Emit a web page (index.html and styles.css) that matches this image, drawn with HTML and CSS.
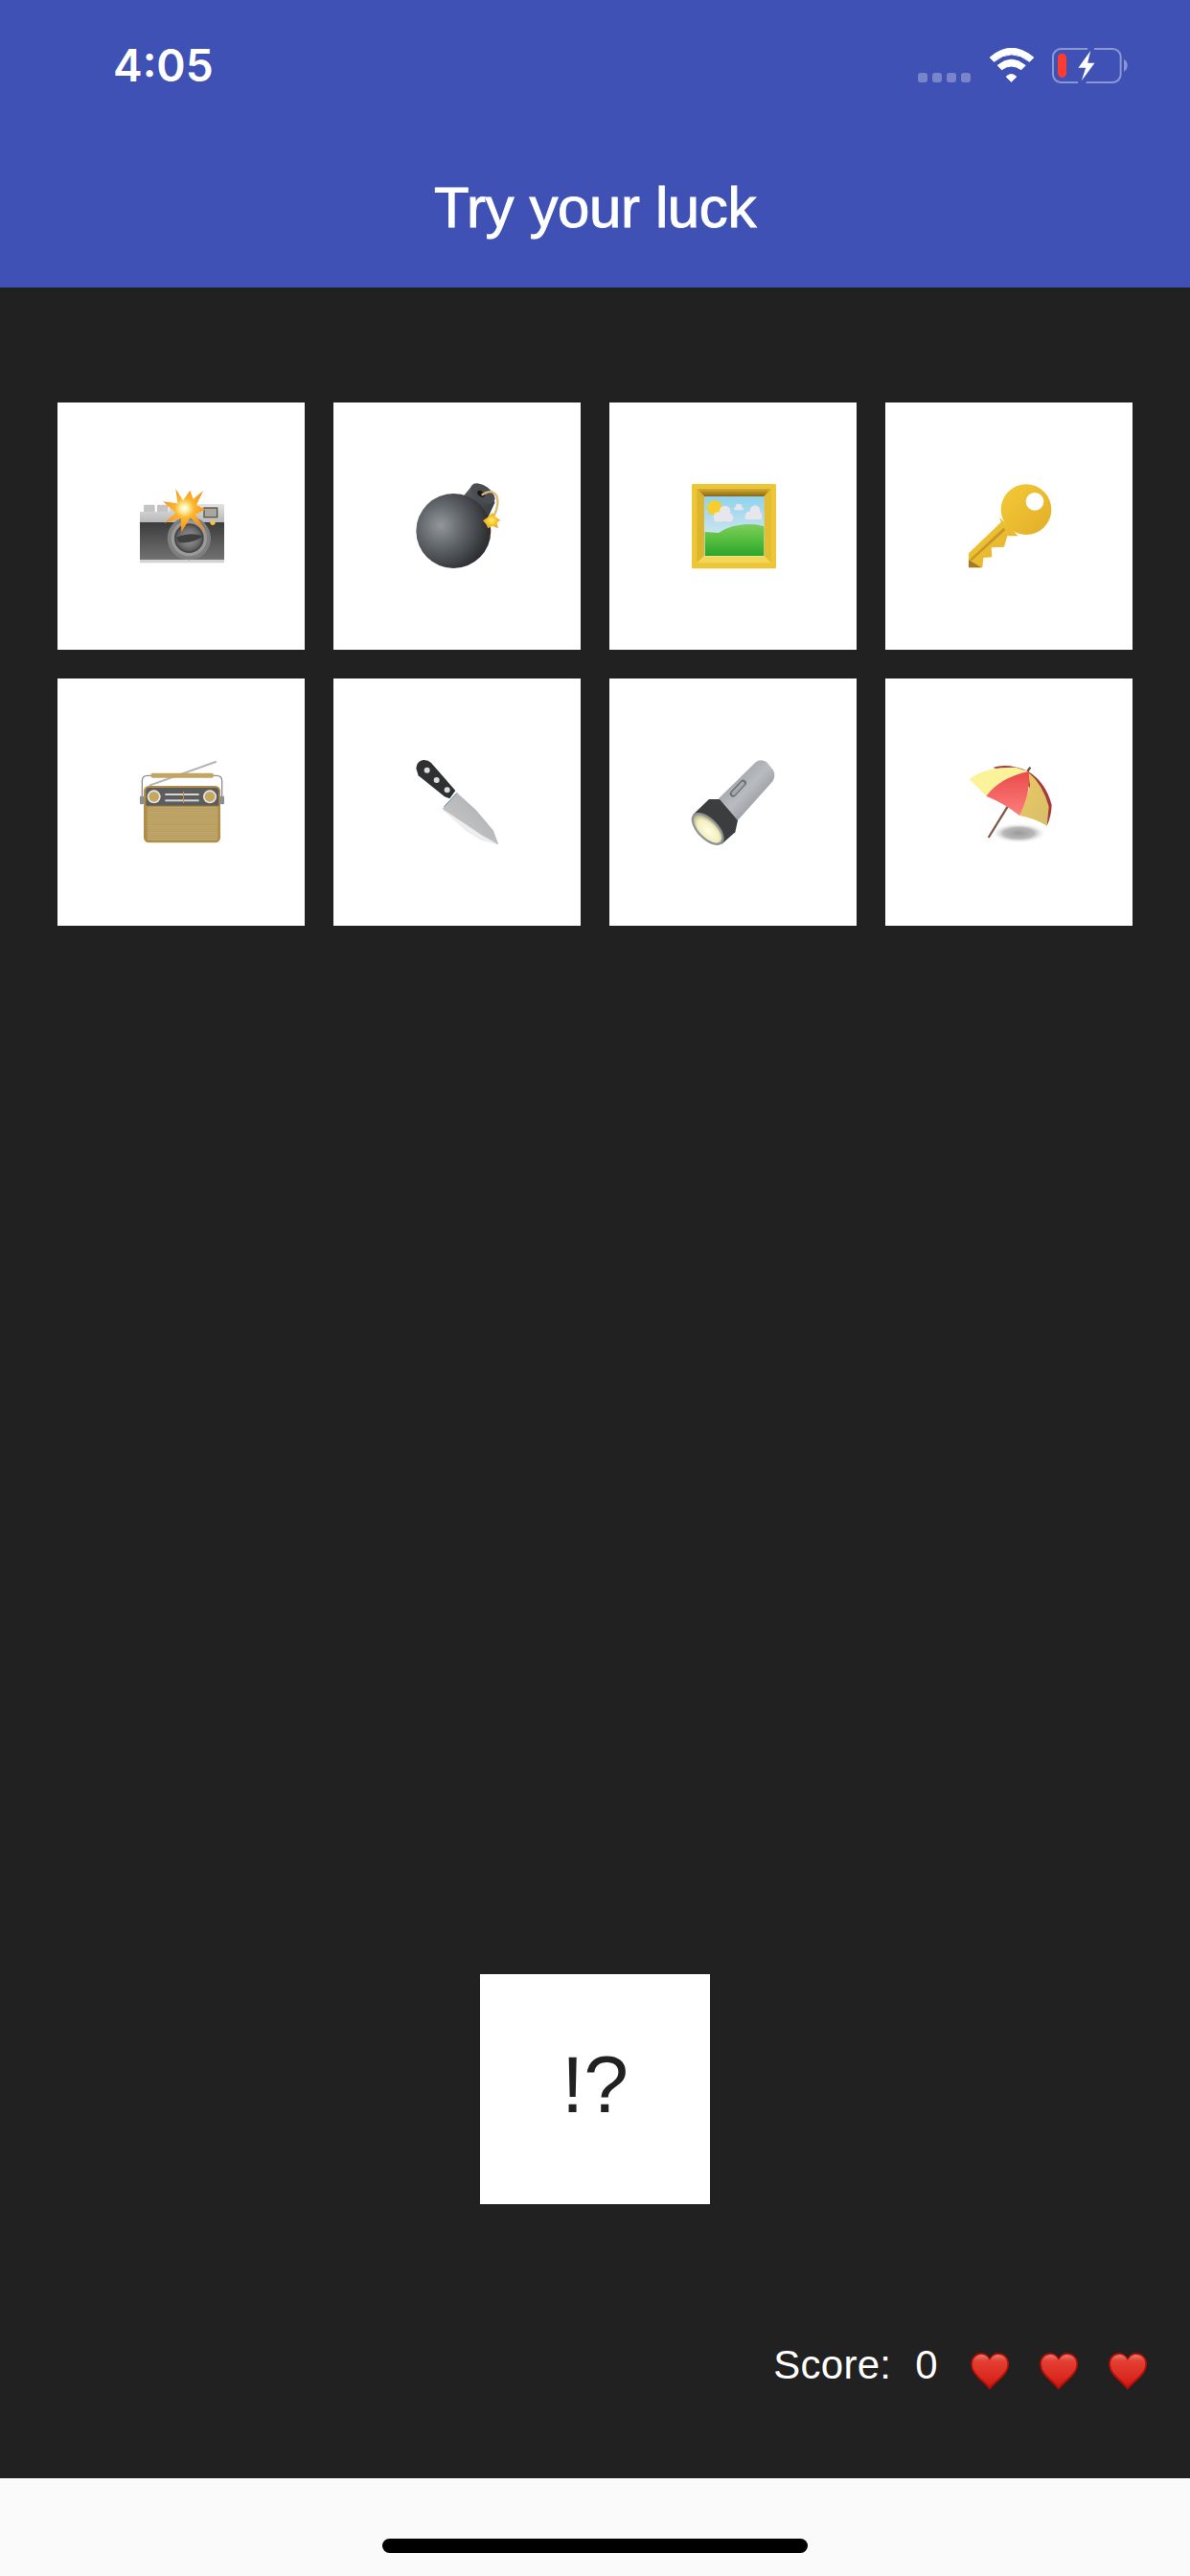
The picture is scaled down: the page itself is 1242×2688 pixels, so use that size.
FILE: index.html
```html
<!DOCTYPE html>
<html lang="en">
<head>
<meta charset="utf-8">
<title>Try your luck</title>
<link rel="stylesheet" href="styles.css">
</head>
<body>
<div class="app">
  <header class="appbar">
    <div class="status">
      <span class="time">4:05</span>
      <div class="status-icons">
        <svg class="dots" viewBox="0 0 55 10"><g fill="#fff" fill-opacity=".3"><rect width="10" height="10" rx="3"/><rect x="15" width="10" height="10" rx="3"/><rect x="30" width="10" height="10" rx="3"/><rect x="45" width="10" height="10" rx="3"/></g></svg>
        <svg class="wifi" viewBox="335 88 143 108"><g fill="#fff" stroke="#fff" stroke-width="3" stroke-linejoin="round"><path d="M338 118Q405 60 475 118L462 131Q405 86 351 131Z"/><path d="M362 143Q405 106 449 143L436 156Q405 134 375 156Z"/><path d="M389 178Q405 163 421 178L405 194Z"/></g></svg>
        <svg class="battery" viewBox="535 88 236 110"><rect x="538" y="91" width="211" height="104" rx="24" fill="none" stroke="#8b97d4" stroke-width="6"/><path d="M759 123Q770 130 770 142T759 162Z" fill="#8b97d4"/><rect x="553" y="105" width="27" height="75" rx="13" fill="#ff3b30"/><path d="M648 84H668L640 202H614Z" fill="#3f51b5"/><path d="M655 97L617 150H640L627 190L668 135H646Z" fill="#fff"/></svg>
      </div>
    </div>
    <h1 class="title">Try your luck</h1>
  </header>

  <main class="board">
    <div class="grid">
      <div class="card">
        <svg class="emoji" viewBox="57 57 300 300" role="img" aria-label="camera with flash">
          <defs>
            <linearGradient id="camBody" x1="0" y1="0" x2="0" y2="1"><stop offset="0" stop-color="#3c3c3c"/><stop offset="1" stop-color="#727272"/></linearGradient>
            <linearGradient id="camTop" x1="0" y1="0" x2="0" y2="1"><stop offset="0" stop-color="#e2e2e2"/><stop offset="1" stop-color="#b8b8b8"/></linearGradient>
            <radialGradient id="camLens" cx=".5" cy=".5" r=".5"><stop offset="0" stop-color="#9b9b9b"/><stop offset=".7" stop-color="#727272"/><stop offset="1" stop-color="#565656"/></radialGradient>
            <radialGradient id="camFlash" cx=".5" cy=".45" r=".5"><stop offset="0" stop-color="#fff"/><stop offset=".15" stop-color="#fff3b0"/><stop offset=".45" stop-color="#fbb62c"/><stop offset="1" stop-color="#f7931e"/></radialGradient>
          </defs>
          <rect x="90" y="140" width="35" height="24" rx="3" fill="#c4c4c4"/>
          <rect x="132" y="140" width="35" height="24" rx="3" fill="#c4c4c4"/>
          <path d="M78 162H170V138H342V195H78Z" fill="url(#camTop)"/>
          <rect x="78" y="195" width="264" height="118" fill="url(#camBody)"/>
          <rect x="78" y="313" width="264" height="9" fill="#d4d4d4"/>
          <rect x="277" y="148" width="45" height="33" fill="#55534f"/>
          <rect x="281" y="152" width="37" height="25" fill="#a9a69f"/>
          <circle cx="306" cy="196" r="8" fill="#f2c53d"/>
          <circle cx="232" cy="245" r="68" fill="#7f7f7f"/>
          <circle cx="232" cy="245" r="56" fill="#9a9a9a"/>
          <circle cx="232" cy="245" r="46" fill="#474747"/>
          <circle cx="232" cy="245" r="41" fill="url(#camLens)"/>
          <path d="M192 243Q232 224 275 238Q250 262 200 258Z" fill="#3f3f3f"/>
          <path d="M190 90L213 127L235 95L245 122L276 97L255 141L283 155L252 170L285 226L236 181L208 226L206 182L155 197L190 165L150 130L196 136Z" fill="url(#camFlash)"/>
        </svg>
      </div>
      <div class="card">
        <svg class="emoji" viewBox="921 57 300 300" role="img" aria-label="bomb">
          <defs>
            <radialGradient id="bombBall" gradientUnits="userSpaceOnUse" cx="1020" cy="205" r="150"><stop offset="0" stop-color="#93979b"/><stop offset=".45" stop-color="#62676c"/><stop offset="1" stop-color="#2e3033"/></radialGradient>
            <linearGradient id="bombNeck" x1="0" y1="0" x2="1" y2="1"><stop offset="0" stop-color="#5b5f64"/><stop offset="1" stop-color="#34363a"/></linearGradient>
            <radialGradient id="bombSpark" cx=".5" cy=".5" r=".5"><stop offset="0" stop-color="#fff27a"/><stop offset=".6" stop-color="#f6c21c"/><stop offset="1" stop-color="#f59a4a"/></radialGradient>
          </defs>
          <path d="M1092 112L1118 80L1190 132L1168 180Z" fill="url(#bombNeck)"/>
          <circle cx="1060" cy="222" r="117" fill="url(#bombBall)"/>
          <ellipse cx="1152" cy="105" rx="43" ry="24" transform="rotate(36 1152 105)" fill="#4a4d52"/>
          <ellipse cx="1146" cy="106" rx="13" ry="8" transform="rotate(36 1146 106)" fill="#17181a"/>
          <path d="M1148 110Q1178 88 1195 112Q1205 140 1184 180" fill="none" stroke="#dcb878" stroke-width="7"/>
          <path d="M1182 165L1190 176L1206 188L1196 197L1200 214L1182 207L1168 214L1162 201L1152 190L1166 180Z" fill="url(#bombSpark)"/>
        </svg>
      </div>
      <div class="card">
        <svg class="emoji" viewBox="75 57 300 300" role="img" aria-label="framed picture">
          <defs>
            <linearGradient id="picSky" x1="0" y1="0" x2="0" y2="1"><stop offset="0" stop-color="#8fd2ec"/><stop offset="1" stop-color="#eef0f2"/></linearGradient>
            <linearGradient id="picGrass" x1="0" y1="0" x2="0" y2="1"><stop offset="0" stop-color="#7fcc5c"/><stop offset=".4" stop-color="#5cc244"/><stop offset="1" stop-color="#2da52c"/></linearGradient>
            <linearGradient id="picTopBevel" x1="0" y1="0" x2="0" y2="1"><stop offset="0" stop-color="#d9b02c"/><stop offset="1" stop-color="#85651a"/></linearGradient>
          </defs>
          <rect x="96" y="75" width="264" height="265" rx="3" fill="#ecc636"/>
          <path d="M112 90H345L322 114H135Z" fill="url(#picTopBevel)"/>
          <path d="M112 90L135 114V300L112 322Z" fill="#dcb52f"/>
          <path d="M345 90L322 114V300L345 322Z" fill="#e4bd30"/>
          <path d="M112 322L135 300H322L345 322Z" fill="#f4d657"/>
          <rect x="135" y="114" width="188" height="187" fill="url(#picSky)"/>
          <path d="M137 225L180 228Q205 210 240 205Q285 195 322 208V300H137Z" fill="url(#picGrass)"/>
          <g stroke="#f6bb27" stroke-width="3"><path d="M168 122V178M140 150H196M148 130L188 170M188 130L148 170"/></g>
          <circle cx="168" cy="150" r="23" fill="#f8cd2e"/>
          <g fill="#e6e6ec"><circle cx="180" cy="178" r="16"/><circle cx="200" cy="160" r="17"/><circle cx="212" cy="180" r="14"/><rect x="165" y="178" width="58" height="15" rx="7"/>
          <circle cx="243" cy="147" r="10"/><rect x="228" y="148" width="30" height="9" rx="4"/>
          <circle cx="294" cy="158" r="16"/><circle cx="276" cy="172" r="11"/><circle cx="303" cy="173" r="12"/><rect x="262" y="172" width="54" height="14" rx="7"/></g>
        </svg>
      </div>
      <div class="card">
        <svg class="emoji" viewBox="939 57 300 300" role="img" aria-label="key">
          <defs>
            <linearGradient id="keyGold" x1="0" y1="0" x2="1" y2="1"><stop offset="0" stop-color="#f3cb38"/><stop offset="1" stop-color="#e2ad28"/></linearGradient>
          </defs>
          <path d="M1064 195L963 292V336L1006 337L1009 306L1036 304L1034 274L1074 272L1084 238L1118 238L1060 180Z" fill="url(#keyGold)"/>
          <path d="M1072 212L968 310L972 316L1078 220Z" fill="#c8962a"/>
          <path d="M963 312L1003 337H963Z" fill="#a47b22"/>
          <circle cx="1143" cy="155" r="79" fill="url(#keyGold)"/>
          <circle cx="1170" cy="130" r="28" fill="#fff"/>
        </svg>
      </div>
      <div class="card">
        <svg class="emoji" viewBox="57 51 300 300" role="img" aria-label="radio">
          <defs>
            <pattern id="radioGrill" width="10" height="7" patternUnits="userSpaceOnUse"><rect width="10" height="7" fill="#c4aa6c"/><rect y="4" width="10" height="2" fill="#a99053"/></pattern>
          </defs>
          <path d="M110 148L315 75" stroke="#b3b3b3" stroke-width="6" stroke-linecap="round"/>
          <path d="M85 190V135Q85 118 102 118H318Q335 118 335 135V190" fill="none" stroke="#8e8e8e" stroke-width="4"/>
          <rect x="113" y="110" width="195" height="15" rx="4" fill="#c2a563"/>
          <rect x="78" y="182" width="12" height="26" rx="3" fill="#8a8d92"/>
          <rect x="330" y="182" width="12" height="26" rx="3" fill="#8a8d92"/>
          <rect x="90" y="150" width="240" height="178" rx="16" fill="#ae8e48"/>
          <path d="M97 166Q97 156 107 156H314Q325 156 325 166V212H97Z" fill="#5c5c5c"/>
          <rect x="101" y="216" width="221" height="105" rx="6" fill="url(#radioGrill)"/>
          <circle cx="122" cy="184" r="21" fill="#e6e6e6"/><circle cx="122" cy="184" r="16" fill="#c6a75e"/>
          <circle cx="297" cy="184" r="21" fill="#e6e6e6"/><circle cx="297" cy="184" r="16" fill="#c6a75e"/>
          <rect x="157" y="174" width="106" height="6" fill="#d6d6d6"/>
          <rect x="157" y="193" width="106" height="6" fill="#d6d6d6"/>
          <rect x="213" y="168" width="3" height="36" fill="#c98a4a"/>
        </svg>
      </div>
      <div class="card">
        <svg class="emoji" viewBox="921 51 300 300" role="img" aria-label="kitchen knife">
          <defs>
            <linearGradient id="knifeBlade" x1="1" y1="0" x2="0" y2="1"><stop offset="0" stop-color="#a9abad"/><stop offset=".65" stop-color="#bfc1c3"/><stop offset="1" stop-color="#ececec"/></linearGradient>
          </defs>
          <path d="M1071 172L1025 222L1100 290L1145 318L1201 334L1185 290L1130 225Z" fill="url(#knifeBlade)"/>
          <path d="M1100 290L1145 318L1201 334L1150 305L1112 280L1030 225L1025 222Z" fill="#eeeeef"/>
          <path d="M1071 172L1030 216" stroke="#5b86a8" stroke-width="3"/>
          <path d="M943 95Q945 72 965 69Q980 68 990 78L1066 165L1048 190L1032 184L950 118Z" fill="#2f3032"/>
          <circle cx="977" cy="101" r="9" fill="#dcdcdc"/><circle cx="1007" cy="132" r="9" fill="#dcdcdc"/><circle cx="1040" cy="163" r="9" fill="#dcdcdc"/>
        </svg>
      </div>
      <div class="card">
        <svg class="emoji" viewBox="75 51 300 300" role="img" aria-label="flashlight">
          <defs>
            <linearGradient id="flashBody" x1="0" y1="0" x2="1" y2="1"><stop offset="0" stop-color="#8b8e92"/><stop offset=".5" stop-color="#b8bbbf"/><stop offset="1" stop-color="#74777b"/></linearGradient>
            <radialGradient id="flashLens" cx=".55" cy=".55" r=".55"><stop offset="0" stop-color="#fffde6"/><stop offset=".7" stop-color="#f4efc0"/><stop offset="1" stop-color="#b9b48c"/></radialGradient>
          </defs>
          <path d="M180 190L297 75Q312 65 330 75L350 100Q360 115 350 135L240 258Z" fill="url(#flashBody)"/>
          <path d="M100 240L150 192L183 192L240 258L232 295L190 332Z" fill="#3c3d3f"/>
          <ellipse cx="146" cy="285" rx="64" ry="33" transform="rotate(45 146 285)" fill="#8d9298"/>
          <ellipse cx="146" cy="285" rx="56" ry="27" transform="rotate(45 146 285)" fill="url(#flashLens)"/>
          <rect x="208" y="148" width="66" height="20" rx="10" transform="rotate(-47 241 158)" fill="#6a6d71"/>
          <rect x="214" y="152" width="54" height="12" rx="6" transform="rotate(-47 241 158)" fill="#a6a9ad"/>
        </svg>
      </div>
      <div class="card">
        <svg class="emoji" viewBox="939 51 300 300" role="img" aria-label="umbrella on ground">
          <defs>
            <radialGradient id="umbShadow" cx=".5" cy=".5" r=".5"><stop offset="0" stop-color="#9a9a9a"/><stop offset=".55" stop-color="#b8b8b8"/><stop offset="1" stop-color="#fff" stop-opacity="0"/></radialGradient>
            <linearGradient id="umbRed" x1="0" y1="0" x2="0" y2="1"><stop offset="0" stop-color="#e94b4b"/><stop offset="1" stop-color="#ff7d7d"/></linearGradient>
            <linearGradient id="umbTan" x1="0" y1="0" x2="1" y2="1"><stop offset="0" stop-color="#ecc862"/><stop offset="1" stop-color="#d7bf6a"/></linearGradient>
          </defs>
          <ellipse cx="1120" cy="298" rx="88" ry="32" fill="url(#umbShadow)"/>
          <path d="M1085 215L1025 312" stroke="#7b5a48" stroke-width="7"/>
          <path d="M1145 108L1156 92" stroke="#6d5040" stroke-width="7"/>
          <path d="M1040 92Q1090 78 1150 105Q1205 140 1223 210Q1222 245 1208 275L1150 150Z" fill="#a53a3a"/>
          <path d="M965 130Q1010 90 1110 92L1150 105L1018 182Z" fill="#fbf39a"/>
          <path d="M1150 108Q1195 145 1214 215L1208 275Q1165 250 1122 243L1155 150Z" fill="url(#umbTan)"/>
          <path d="M1018 182Q1060 125 1150 105Q1160 165 1122 243Q1075 205 1018 182Z" fill="url(#umbRed)"/>
        </svg>
      </div>
    </div>

    <div class="guess">!?</div>

    <div class="score">
      <span class="score-label">Score:</span>
      <span class="score-value">0</span>
      <svg class="heart" viewBox="698 132 120 120" role="img" aria-label="heart">
        <defs><linearGradient id="heartFill" x1="0" y1="0" x2="0" y2="1"><stop offset="0" stop-color="#e87a70"/><stop offset=".2" stop-color="#e33f32"/><stop offset=".7" stop-color="#dc2a20"/><stop offset="1" stop-color="#c81a12"/></linearGradient></defs>
        <path d="M758 251C735 222 699 205 699 170C699 150 714 136 732 136C744 136 753 143 758 153C763 143 772 136 784 136C803 136 818 150 818 170C818 205 781 222 758 251Z" fill="#b80f08"/>
        <path d="M758 241C738 217 704 200 704 170C704 153 717 141 732 141C744 141 753 149 758 160C763 149 772 141 784 141C800 141 813 153 813 170C813 200 778 217 758 241Z" fill="url(#heartFill)"/>
      </svg>
      <svg class="heart" viewBox="698 132 120 120" role="img" aria-label="heart">
        <path d="M758 251C735 222 699 205 699 170C699 150 714 136 732 136C744 136 753 143 758 153C763 143 772 136 784 136C803 136 818 150 818 170C818 205 781 222 758 251Z" fill="#b80f08"/>
        <path d="M758 241C738 217 704 200 704 170C704 153 717 141 732 141C744 141 753 149 758 160C763 149 772 141 784 141C800 141 813 153 813 170C813 200 778 217 758 241Z" fill="url(#heartFill)"/>
      </svg>
      <svg class="heart" viewBox="698 132 120 120" role="img" aria-label="heart">
        <path d="M758 251C735 222 699 205 699 170C699 150 714 136 732 136C744 136 753 143 758 153C763 143 772 136 784 136C803 136 818 150 818 170C818 205 781 222 758 251Z" fill="#b80f08"/>
        <path d="M758 241C738 217 704 200 704 170C704 153 717 141 732 141C744 141 753 149 758 160C763 149 772 141 784 141C800 141 813 153 813 170C813 200 778 217 758 241Z" fill="url(#heartFill)"/>
      </svg>
    </div>
  </main>

  <footer class="homebar"><span class="home-indicator"></span></footer>
</div>
</body>
</html>
```

FILE: styles.css
```css
* { box-sizing: border-box; }

html, body {
  margin: 0;
  padding: 0;
}

body {
  background: #212121;
  font-family: "Liberation Sans", Arial, sans-serif;
}

.app {
  display: flex;
  flex-direction: column;
  width: 1242px;
  height: 2688px;
  overflow: hidden;
}

.appbar {
  display: flex;
  flex-direction: column;
  flex: 0 0 300px;
  background: #3f51b5;
  color: #fff;
}

.status {
  display: flex;
  align-items: center;
  justify-content: space-between;
  flex: 0 0 136px;
  padding: 0 65px 0 118px;
}

.time {
  font-family: Inter, sans-serif;
  font-size: 46px;
  font-weight: 600;
  line-height: 1;
}

.status-icons {
  display: flex;
  align-items: center;
}

.dots {
  width: 55px;
  height: 10px;
  margin-top: 26px;
  margin-right: 19px;
}

.wifi {
  width: 48px;
  height: 36px;
  margin-right: 18px;
}

.battery {
  width: 79px;
  height: 37px;
}

.title {
  flex: 1;
  display: flex;
  align-items: center;
  justify-content: center;
  margin: 0;
  padding-bottom: 4px;
  font-family: "Liberation Sans", Arial, sans-serif;
  font-size: 60px;
  font-weight: 400;
  letter-spacing: -0.4px;
  -webkit-text-stroke: 0.9px #fff;
}

.board {
  flex: 1;
  display: flex;
  flex-direction: column;
  padding-top: 120px;
}

.grid {
  display: grid;
  grid-template-columns: repeat(4, 258px);
  grid-auto-rows: 258px;
  gap: 30px;
  padding: 0 60px;
}

.card {
  display: flex;
  align-items: center;
  justify-content: center;
  background: #fff;
}

.emoji {
  width: 100px;
  height: 100px;
}

.guess {
  display: flex;
  align-items: center;
  justify-content: center;
  align-self: center;
  width: 240px;
  height: 240px;
  margin-top: auto;
  padding-bottom: 10px;
  background: #fff;
  color: #212121;
  font-size: 84px;
  line-height: 1;
}

.score {
  display: flex;
  align-items: center;
  justify-content: flex-end;
  height: 66px;
  margin: 134px 0 86px;
  padding-right: 45px;
  color: #fff;
  font-size: 42px;
  letter-spacing: 0.3px;
}

.score-label {
  margin-right: 25px;
  padding-top: 2px;
}

.score-value {
  margin-right: 34px;
  padding-top: 2px;
}

.heart {
  flex: none;
  width: 40px;
  height: 40px;
  margin-top: 14px;
}

.heart + .heart {
  margin-left: 32px;
}

.homebar {
  display: flex;
  justify-content: center;
  flex: 0 0 102px;
  padding-top: 63px;
  background: #fafafa;
}

.home-indicator {
  width: 444px;
  height: 15px;
  border-radius: 8px;
  background: #000;
}
```
